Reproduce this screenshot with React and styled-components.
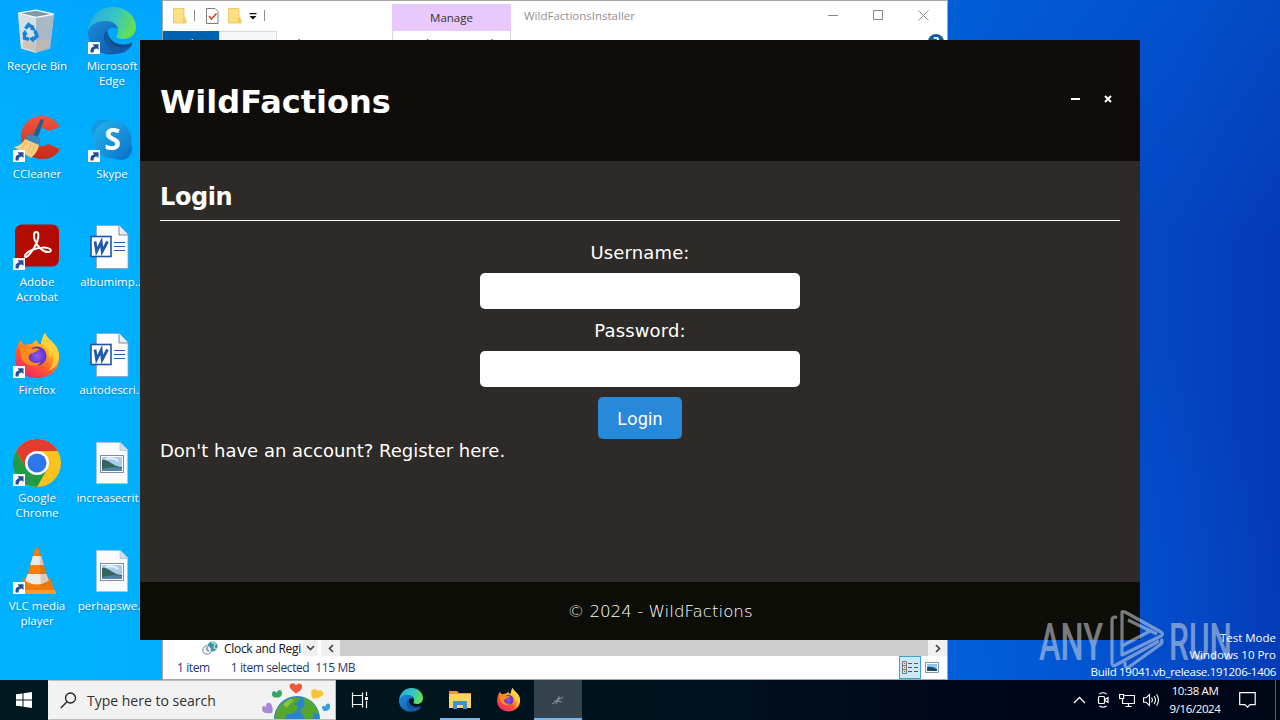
import React from "react";
import styled, { createGlobalStyle, css } from "styled-components";

const ui = '"Open Sans", "Noto Sans", sans-serif';
const verdana = '"DejaVu Sans", sans-serif';

const GlobalStyle = createGlobalStyle`
  * { box-sizing: border-box; }
  body {
    margin: 0;
    overflow: hidden;
    font-family: ${ui};
  }
  svg { display: block; flex: none; }
`;

/* ---------- drawings ---------- */

const ShortcutArrow = () => (
  <g transform="translate(0 1)">
    <rect x="1" y="34" width="12" height="12" fill="#fbfdff" />
    <path d="M3.8 44.5c-1-3.600.6-5.700 3.300-6.100l-1.400-2.100h5.800v5.700l-1.700-1.600c-2.200 0-3.400 1.500-3.200 4.100z" fill="#234f94" />
  </g>
);

const RecycleIcon = () => (
  <svg width="48" height="48" viewBox="1 0 48 48">
    <g transform="translate(0 1) scale(1 1.040)">
      <path d="M6 5l18-3 18 4-4 33-14 4-15-4z" fill="#b9c7d3" />
      <path d="M6 5l18 3v35l-15-4z" fill="#d5dfe6" />
      <path d="M24 8l18-2-4 33-14 4z" fill="#aab8c5" />
      <path d="M6 5l18-3 18 4-18 3z" fill="#7f98a8" stroke="#f2f8fb" strokeWidth="1.300" />
      <path d="M11 32l6-3 7 4v9l-13-4zM24 33l7-4 6 3-1 6-12 4z" fill="#c9b8ad" opacity=".7" />
      <g fill="none" stroke="#1583d8" strokeWidth="3.400">
        <path d="M13.500 20l3-4 4.500 3" />
        <path d="M23 22l2 5-4.500 4" />
        <path d="M17 30l-4.500-1v-5" />
      </g>
      <path d="M21 16l3 6-6-1zM21.500 27v6.500l-4.500-4zM10 24.500l3-3.500 3 5z" fill="#1583d8" />
    </g>
  </svg>
);

const EdgeArt = ({ id }) => (
  <g>
    <defs>
      <linearGradient id={`${id}a`} x1="0" y1="0.2" x2="1" y2="0.5">
        <stop offset="0" stopColor="#2aa9e0" />
        <stop offset=".55" stopColor="#36c6c4" />
        <stop offset="1" stopColor="#66e04f" />
      </linearGradient>
      <linearGradient id={`${id}b`} x1="0" y1="0" x2="1" y2="1">
        <stop offset="0" stopColor="#1b8fdc" />
        <stop offset="1" stopColor="#1156a8" />
      </linearGradient>
    </defs>
    <path d="M0 24C2 9 12 0 25 0c14 0 23 10 23 20 0 8-6 12-13 12-5 0-7-2-6-4 3-4 1-12-8-13C11 14 3 18 0 24z" fill={`url(#${id}a)`} />
    <path d="M0 24c3-7 9-10 17-10 7 0 12 3 13 8-6-4-13 1-13 9 0 7 5 13 11 16C12 50-1 39 0 24z" fill={`url(#${id}b)`} />
    <path d="M19 23c-5 5-3 14 3 18 7 5 17 3 22-4 1-1 0-2-1-1-12 5-23-2-24-13z" fill="#114a8b" />
    <path d="M17 31c0 7 5 13 11 16 7 0 13-4 16-9-12 6-25 1-25-15-1 2-2 5-2 8z" fill="#1459a6" />
  </g>
);

const EdgeIcon = () => (
  <svg width="50" height="48" viewBox="0 0 50 48">
    <g transform="translate(1 0)"><EdgeArt id="edge" /></g>
    <ShortcutArrow />
  </svg>
);

const CCleanerIcon = () => (
  <svg width="48" height="48" viewBox="1 0 48 48">
    <defs>
      <linearGradient id="cc" x1="0" y1="0" x2="0" y2="1">
        <stop offset="0" stopColor="#f0553d" />
        <stop offset="1" stopColor="#c92a19" />
      </linearGradient>
    </defs>
    <path d="M48 12C43 4 37 1 30 1 18 1 9 10 9 22s9 22 21 22c8 0 14-3 18-10l-12-5c-7 5-15 1-15-7s8-12 15-6z" fill="url(#cc)" />
    <path d="M29 4l3 1-7 19-5-2z" fill="#285d87" />
    <path d="M18 19l9 3c2 4 2 6-1 8l-12-5c0-3 1-5 4-6z" fill="#3587bd" />
    <path d="M13 24l14 6c-1 6-4 9-8 13L2 32c5-1 8-3 11-8z" fill="#f8ce83" />
    <path d="M14 27l-4 7M19 29l-3 8M23 30l-4 9" stroke="#e8b763" fill="none" />
    <ShortcutArrow />
  </svg>
);

const SkypeIcon = () => (
  <svg width="50" height="48" viewBox="0 0 50 48">
    <defs>
      <linearGradient id="sk" x1="0" y1="0" x2="1" y2="1">
        <stop offset="0" stopColor="#26b5ee" />
        <stop offset="1" stopColor="#0873c8" />
      </linearGradient>
    </defs>
    <circle cx="16" cy="15" r="11" fill="#149ae2" />
    <circle cx="34" cy="34" r="11" fill="#0b78d0" />
    <circle cx="25.500" cy="24.500" r="19" fill="url(#sk)" />
    <text x="25.500" y="35" textAnchor="middle" fontFamily="Open Sans, sans-serif" fontWeight="700" fontSize="30" fill="#fff">S</text>
    <ShortcutArrow />
  </svg>
);

const AcrobatIcon = () => (
  <svg width="48" height="48" viewBox="1 0 48 48">
    <rect x="3" y="1.500" width="44" height="42" rx="7" fill="#b30b00" />
    <path d="M24 9c3-1 3 5 1 10-3 7-8 14-11 15-3 0 0-5 6-7 7-3 15-3 18-1 3 3-2 4-6 2-6-3-10-10-10-15 0-3 1-4 2-4z" fill="none" stroke="#fff" strokeWidth="2" />
    <ShortcutArrow />
  </svg>
);

const FirefoxArt = ({ id }) => (
  <g>
    <defs>
      <linearGradient id={`${id}a`} x1=".85" y1="0" x2=".2" y2="1">
        <stop offset="0" stopColor="#fff04a" />
        <stop offset=".35" stopColor="#ffab24" />
        <stop offset=".65" stopColor="#ff5630" />
        <stop offset="1" stopColor="#e91d77" />
      </linearGradient>
      <radialGradient id={`${id}b`}>
        <stop offset="0" stopColor="#9359ef" />
        <stop offset="1" stopColor="#5a2fc1" />
      </radialGradient>
    </defs>
    <path d="M8 9c1 3 2 4 4 5 3-1 4-1 7-1 2-3 3-3 5-4 0 3 1 4 4 4 1-6 3-10 4-11 2 5 6 7 9 11 4 4 6 9 5 16-1 11-10 18-22 18S2 39 2 27C2 19 5 12 8 9z" fill={`url(#${id}a)`} />
    <circle cx="24" cy="25" r="9.500" fill={`url(#${id}b)`} />
    <path d="M8 15c5-2 9 0 11 3 3-1 6-1 8 1-3 0-4 2-7 3-3 0-5 3-4 6 2 4 7 5 12 3-5 7-17 4-20-5-1-4-1-8 0-11z" fill="#ff8b1f" />
    <path d="M28 13c6 2 9 7 8 14 3-1 3-4 3-6 3 7 1 15-5 19 13-3 15-17 8-26-4-5-8-7-10-12-2 3-3 7-4 11z" fill="#ffd43a" opacity=".8" />
  </g>
);

const FirefoxIcon = () => (
  <svg width="48" height="48" viewBox="1 0 48 48">
    <g transform="translate(1 0)"><FirefoxArt id="ff" /></g>
    <ShortcutArrow />
  </svg>
);

const ChromeIcon = () => (
  <svg width="48" height="48" viewBox="1 0 48 48">
    <circle cx="25" cy="24" r="24" fill="#fcc31e" />
    <path d="M4.200 12A24 24 0 0 1 45.800 12H25L14.600 30z" fill="#e33b2e" />
    <path d="M4.200 12A24 24 0 0 0 25 48L35.400 30H14.600z" fill="#229a48" />
    <circle cx="25" cy="24" r="12" fill="#fff" />
    <circle cx="25" cy="24" r="9.500" fill="#2f76ea" />
    <ShortcutArrow />
  </svg>
);

const VlcIcon = () => (
  <svg width="48" height="48" viewBox="1 0 48 48">
    <path d="M11 31h27l6 16H9z" fill="#ef7a0b" />
    <path d="M10 43h33l1 4H9z" fill="#f99b32" />
    <path d="M23 2q2-2 4 0l10 34q-12 8-24 0z" fill="#f57d09" />
    <path d="M20.800 9h8.400l2.600 9H18.200zM15.600 27h18.800l2.300 7q-12 7-23.400 0z" fill="#eceae6" />
    <path d="M27 2l10 34q-4 3-8 3z" fill="#9d4a05" opacity=".2" />
    <ShortcutArrow />
  </svg>
);

const WordIcon = () => (
  <svg width="48" height="48" viewBox="0 0 48 48">
    <path d="M8.500 2.500h23l8.500 9v34H8.500z" fill="#fdfdff" stroke="#8ba0b4" strokeWidth=".8" />
    <path d="M31 2.500v9.500h9" fill="#e8eef5" stroke="#6c8094" strokeWidth=".9" />
    <path d="M26 19.500h11M26 23.500h11M26 27.500h11M26 15.500h0M26 31.500h0" stroke="#2b5caa" strokeWidth="1" />
    <rect x="3" y="13.500" width="20" height="20" fill="#fff" stroke="#1d53a9" strokeWidth="1.600" />
    <path d="M7 18.500l1.600 10 4.600-9.500 1 9.500 5.300-10" fill="none" stroke="#2359ad" strokeWidth="2.800" />
  </svg>
);

const PictureIcon = () => (
  <svg width="48" height="48" viewBox="0 1 48 48">
    <path d="M8.500 4.500h24l7 7v34h-31z" fill="#f9fafb" stroke="#b5c0c9" strokeWidth=".8" />
    <path d="M32 4.500v8h8z" fill="#cde2ee" stroke="#a9bac7" strokeWidth=".6" />
    <rect x="12.500" y="17.500" width="23" height="17" fill="#fff" stroke="#7e8d9c" />
    <path d="M14 19h20v14H14z" fill="#a9cbed" />
    <path d="M14 22q3-1 9 3t11 4v2H14z" fill="#33665c" />
    <path d="M14 31q10-3 20-1v3H14z" fill="#5182a8" />
    <path d="M18 21q7-2 12 2" stroke="#e8f3fb" strokeWidth="2" fill="none" />
  </svg>
);

const FolderGlyph = () => (
  <svg width="14" height="16" viewBox="0 0 14 16">
    <path d="M.5.500h10.500v10l2 1v3.500H.5z" fill="#fbdf83" stroke="#e5c05d" strokeWidth=".8" />
    <path d="M10 9.500h2.500v5.500H10z" fill="#f6cb55" />
  </svg>
);

const CheckDoc = () => (
  <svg width="13" height="16" viewBox="0 0 13 16">
    <path d="M.5.500h8.500l3 3v12H.5z" fill="#fff" stroke="#7c7c7c" />
    <path d="M3 8l2.500 3 5-5.500" fill="none" stroke="#d84c26" strokeWidth="1.700" />
  </svg>
);

const Globe = () => (
  <svg width="74" height="38" viewBox="261 681 74 38">
    <circle cx="297" cy="719" r="23" fill="#2b83cf" />
    <path d="M276 712c3-8 11-14 20-15l5 2-7 5 5 3-5 6-7 1-3 6h-10zM303 697c9 3 14 9 16 17l-5-1-2 6h-7l-5-9 5-5z" fill="#55a630" />
    <path d="M283 704l7-5 4 1-8 8z" fill="#8bc540" />
    <g>
      <path d="M296 693.500c-4-3-6.500-5-6.500-7.500 0-3 5-4 6.500-.5 2-3.500 6.500-2 6.200 1.500-.2 3-3 4.500-6.200 6.500z" fill="#ed5a3c" />
      <path d="M280 697c-4 1-7 1-8-2-1-4 3-5 5-2 0-4 5-4 5 0 0 2-1 3-2 4z" fill="#2fa964" />
      <path d="M313 699c-2-4-3-9 1-10 2 0 3 1 4 2 3-2 6 1 5 4-1 2-6 3-10 4z" fill="#f8c233" />
      <path d="M272 713c-5 1-10 0-10-4 0-3 2-4 4-2-1-5 5-6 6-1 1 2 1 4 0 7z" fill="#a78bd2" />
      <path d="M324 711c-4-4-1-7 1-4 1-5 6-4 5 0 0 3-3 4-6 4z" fill="#2f9fe6" />
    </g>
  </svg>
);

const TaskViewIcon = () => (
  <svg width="18" height="18" viewBox="0 0 18 18" fill="none" stroke="#f3f6f7" strokeWidth="1.200">
    <path d="M1.500 1.500v3h10v-3M1.500 16.500v-3h10v3M1.500 4.500v9M11.500 4.500v9M15.500 1v4M15.500 10v7" />
    <path d="M14 6h3v3h-3z" fill="#f3f6f7" stroke="none" />
  </svg>
);

const ExplorerIcon = () => (
  <svg width="22" height="20" viewBox="0 0 22 20">
    <path d="M0 1h8l2 2h12v4H0z" fill="#e99c1b" />
    <path d="M0 4h22v14H0z" fill="#fcd465" />
    <path d="M4 19v-7q0-1 1-1h12q1 0 1 1v7h-4v-4H8v4z" fill="#3c93d1" />
  </svg>
);

const PluginIcon = () => (
  <svg width="14" height="14" viewBox="0 0 14 14" fill="none" stroke="#abb4ba" strokeWidth="1">
    <path d="M1 11l4-2 2-4 2 1 3-2M3 8h4l4 1M8 3v4l-3 4" opacity=".7" />
  </svg>
);

const RunLogo = () => (
  <svg width="196" height="66" viewBox="1038 608 196 66" opacity=".55">
    <g fill="#cfd5df" fontFamily="Roboto, sans-serif" fontSize="52" fontWeight="500">
      <text x="1039" y="660" textLength="64" lengthAdjust="spacingAndGlyphs">ANY</text>
      <text x="1169" y="660" textLength="63" lengthAdjust="spacingAndGlyphs">RUN</text>
    </g>
    <g fill="none" stroke="#cfd5df" strokeWidth="3.200" strokeLinejoin="round">
      <path d="M1117 617.500l-2-.5q-3 0-3 3v43q0 4 4 2l43-24" />
      <path d="M1122 612v43l39-19q3-2 0-4l-36-20q-3-1-3 0z" />
      <path d="M1128 620l29 14M1122 646l30-16M1125 662v3q0 4 4 2l32-23q2-2 0-5" />
    </g>
  </svg>
);

/* ---------- desktop ---------- */

const Desktop = styled.main`
  position: relative;
  width: 1280px;
  height: 720px;
  overflow: hidden;
  background:
    radial-gradient(ellipse 420px 500px at 880px 700px, rgba(0, 112, 235, 0.5), transparent),
    linear-gradient(180deg, rgba(0, 130, 245, 0.2) 0, transparent 240px),
    linear-gradient(90deg, #00b2ff 0, #00b0ff 160px, #0057d0 940px, #0444c2 1180px, #033bb5 1280px);
`;

const IconGrid = styled.section`
  display: grid;
  grid-template-columns: 74px 76px;
  grid-auto-rows: 108px;
  width: 150px;
  padding-top: 7px;
`;

const Shortcut = styled.div`
  display: flex;
  flex-direction: column;
  align-items: center;
`;

const ShortcutLabel = styled.span`
  margin-top: 3px;
  color: #fff;
  font-size: 11.5px;
  line-height: 15px;
  text-align: center;
  white-space: pre;
  text-shadow: 0 1px 2px rgba(0, 40, 90, 0.35);
`;

const shortcuts = [
  { label: "Recycle Bin", icon: RecycleIcon },
  { label: "Microsoft\nEdge", icon: EdgeIcon },
  { label: "CCleaner", icon: CCleanerIcon },
  { label: "Skype", icon: SkypeIcon },
  { label: "Adobe\nAcrobat", icon: AcrobatIcon },
  { label: "albumimp...", icon: WordIcon },
  { label: "Firefox", icon: FirefoxIcon },
  { label: "autodescri...", icon: WordIcon },
  { label: "Google\nChrome", icon: ChromeIcon },
  { label: "increasecrit...", icon: PictureIcon },
  { label: "VLC media\nplayer", icon: VlcIcon },
  { label: "perhapswe...", icon: PictureIcon },
];

/* ---------- explorer window ---------- */

const Explorer = styled.section`
  position: absolute;
  left: 162px;
  top: 0;
  width: 786px;
  height: 680px;
  display: flex;
  flex-direction: column;
  background: #fff;
  border: 1px solid #a5a5a5;
`;

const ExplorerTop = styled.header`
  display: flex;
  height: 45px;
`;

const QuickSide = styled.div`
  width: 229px;
`;

const QuickBar = styled.div`
  display: flex;
  align-items: center;
  height: 30px;
  padding-left: 10px;
`;

const QuickItem = styled.span`
  display: flex;
  margin-right: ${(p) => p.$gap}px;
`;

const Divider = styled.i`
  width: 1px;
  height: 11px;
  margin: 0 ${(p) => p.$gap || 0}px 2px 0;
  background: #8c8c8c;
`;

const Tabs = styled.div`
  display: flex;
`;

const tabText = css`
  height: 27px;
  padding-top: 3px;
  font-size: 12px;
  line-height: 22px;
  text-align: center;
  color: #333;
`;

const Tab = styled.div`
  ${tabText}
  width: ${(p) => p.$w}px;
  ${(p) => p.$file && "background: #0063b1; color: #fff;"}
  ${(p) => p.$open && "background: #f5f6f7; border: 1px solid #dadbdc; border-bottom: 0; line-height: 20px;"}
`;

const ManageGroup = styled.div`
  width: 119px;
  padding-top: 3px;
`;

const ManageTitle = styled.div`
  height: 27px;
  background: #e9c8fc;
  font-size: 11.5px;
  line-height: 28px;
  text-align: center;
  color: #333;
`;

const ManageTab = styled.div`
  ${tabText}
  border: 1px solid #d7d7d7;
  border-top: 0;
  white-space: nowrap;
`;

const ExplorerTitle = styled.div`
  width: 300px;
  padding-left: 13px;
  font-size: 11.5px;
  line-height: 29px;
  color: #8f8f8f;
`;

const CaptionSide = styled.div`
  width: 135px;
  margin-left: auto;
`;

const CaptionButtons = styled.div`
  display: flex;
  align-items: center;
  height: 29px;
  padding-left: 16px;
  gap: 34px;
`;

const HelpRow = styled.div`
  display: flex;
  justify-content: flex-end;
  align-items: center;
  gap: 13px;
  padding: 4px 3px 0 0;
`;

const HelpBadge = styled.span`
  width: 16px;
  height: 16px;
  border-radius: 50%;
  background: #0d5ca3;
  color: #fff;
  font-size: 12px;
  font-weight: 700;
  line-height: 16px;
  text-align: center;
`;

const ExplorerBottom = styled.div`
  display: flex;
  margin-top: auto;
  height: 16px;
`;

const TreeRow = styled.div`
  display: flex;
  align-items: center;
  width: 140px;
  padding-left: 39px;
  gap: 6px;
  color: #111;
  white-space: nowrap;
`;

const TreeText = styled.span`
  font-size: 12px;
  line-height: 16px;
  letter-spacing: -0.3px;
  padding-top: 1px;
`;

const ScrollButton = styled.div`
  display: flex;
  align-items: center;
  justify-content: center;
  width: ${(p) => p.$w}px;
  background: #f0f0f0;
`;

const TreeScroll = styled(ScrollButton)`
  padding-bottom: 1px;
  margin-right: 3px;
`;

const ScrollThumb = styled.div`
  flex: 1;
  background: #cdcdcd;
`;

const StatusBar = styled.footer`
  display: flex;
  align-items: center;
  height: 23px;
  padding: 0 4px 0 14px;
  color: #26386f;
  font-size: 12px;
`;

const StatusText = styled.span`
  margin-right: ${(p) => p.$gap || 0}px;
  letter-spacing: -0.4px;
  white-space: nowrap;
`;

const ViewButtons = styled.div`
  display: flex;
  align-items: center;
  margin-left: auto;
`;

const ViewButton = styled.div`
  display: flex;
  align-items: center;
  justify-content: center;
  width: 22px;
  height: 23px;
  ${(p) => p.$active && "background: #cce8f6; border: 1px solid #3aa2d4;"}
`;

/* ---------- launcher window ---------- */

const Launcher = styled.section`
  position: absolute;
  left: 140px;
  top: 40px;
  width: 1000px;
  height: 600px;
  display: flex;
  flex-direction: column;
  background: #2e2a27;
  color: #fff;
  font-family: ${verdana};
  font-size: 18px;
`;

const LauncherHeader = styled.header`
  display: flex;
  align-items: center;
  justify-content: space-between;
  height: 121px;
  padding: 0 27px 0 20px;
  background: #0f0c09;
`;

const Brand = styled.h1`
  margin: 0;
  padding-top: 2px;
  font-size: 32px;
  line-height: 40px;
`;

const WindowActions = styled.div`
  display: flex;
  align-items: center;
  gap: 22px;
  padding-bottom: 3px;
`;

const LauncherBody = styled.div`
  flex: 1;
  padding: 20px 20px 0;
`;

const Heading = styled.h2`
  margin: 0;
  height: 40px;
  border-bottom: 1px solid #fff;
  font-size: 24px;
  line-height: 33px;
  letter-spacing: -0.4px;
`;

const Form = styled.form`
  display: flex;
  flex-direction: column;
  align-items: center;
  padding-top: 20px;
`;

const Label = styled.label`
  height: 22px;
  line-height: 23px;
  margin-bottom: 10px;
  letter-spacing: 0.15px;
`;

const Input = styled.input`
  width: 320px;
  height: 36px;
  margin: 0 0 10px;
  padding: 8px;
  border: 0;
  border-radius: 5px;
  background: #fff;
  outline: none;
`;

const LoginButton = styled.button`
  width: 84px;
  height: 42px;
  padding: 0;
  border: 0;
  border-radius: 5px;
  background: #2888da;
  color: #fff;
  font: 400 18px Roboto, sans-serif;
  letter-spacing: 0.2px;
`;

const RegisterText = styled.p`
  margin: 0;
  line-height: 24px;
`;

const LauncherFooter = styled.footer`
  height: 58px;
  padding-left: 40px;
  background: #0e0e09;
  color: #fff;
  font-size: 16.7px;
  font-weight: 300;
  line-height: 59px;
  text-align: center;
`;

/* ---------- watermarks and taskbar ---------- */

const Watermark = styled.div`
  position: absolute;
  left: 1038px;
  top: 608px;
`;

const BuildInfo = styled.div`
  position: absolute;
  right: 4px;
  top: 629px;
  display: flex;
  flex-direction: column;
  align-items: flex-end;
  color: #fff;
  font-size: 11.5px;
  line-height: 17px;
  white-space: nowrap;
`;

const BuildNumber = styled.span`
  letter-spacing: -0.29px;
`;

const Taskbar = styled.nav`
  position: absolute;
  left: 0;
  top: 680px;
  width: 1280px;
  height: 40px;
  display: flex;
  background: linear-gradient(90deg, #001820, #00131d 50%, #00061a 80%, #000718);
`;

const StartButton = styled.div`
  display: flex;
  align-items: center;
  justify-content: center;
  width: 48px;
`;

const SearchBox = styled.div`
  display: flex;
  align-items: center;
  width: 288px;
  padding-left: 11px;
  background: #f2f2f2;
  border: 1px solid #b9bdbf;
  border-left-color: #f2f2f2;
  color: #303030;
  font-size: 14px;
`;

const SearchText = styled.span`
  width: 184px;
  padding-left: 10px;
  white-space: nowrap;
`;

const TaskButton = styled.div`
  display: flex;
  align-items: center;
  justify-content: center;
  width: ${(p) => p.$w || 49}px;
  padding-bottom: 1px;
  ${(p) => p.$active && "background: #34434d;"}
  ${(p) => p.$open && "border-bottom: 2px solid #79b8e8; padding-bottom: 0; padding-top: 1px;"}
`;

const RunningButton = styled(TaskButton)`
  margin: 0 ${(p) => p.$side || 0}px;
`;

const Tray = styled.div`
  display: flex;
  align-items: center;
  margin-left: auto;
  color: #fff;
`;

const TrayCell = styled.div`
  display: flex;
  justify-content: center;
  width: ${(p) => p.$w || 24}px;
`;

const Clock = styled.div`
  width: 64px;
  font-size: 11.5px;
  line-height: 18px;
  letter-spacing: -0.4px;
  text-align: center;
  white-space: nowrap;
`;

const ShowDesktop = styled.i`
  width: 5px;
  height: 40px;
  margin-left: 8px;
  border-left: 1px solid #596270;
`;

const ExplorerWindow = () => (
  <Explorer>
    <ExplorerTop>
      <QuickSide>
        <QuickBar>
          <QuickItem $gap={7}><FolderGlyph /></QuickItem>
          <Divider $gap={11} />
          <QuickItem $gap={9}><CheckDoc /></QuickItem>
          <QuickItem $gap={7}><FolderGlyph /></QuickItem>
          <QuickItem $gap={7}>
            <svg width="8" height="7" viewBox="0 0 8 7"><path d="M.5 0h7v1.200h-7zM.5 3h7L4 6.500z" fill="#111" /></svg>
          </QuickItem>
          <Divider />
        </QuickBar>
        <Tabs>
          <Tab $w={56} $file>File</Tab>
          <Tab $w={58} $open>Home</Tab>
          <Tab $w={60}>Share</Tab>
          <Tab $w={54}>View</Tab>
        </Tabs>
      </QuickSide>
      <ManageGroup>
        <ManageTitle>Manage</ManageTitle>
        <ManageTab>Application Tools</ManageTab>
      </ManageGroup>
      <ExplorerTitle>WildFactionsInstaller</ExplorerTitle>
      <CaptionSide>
        <CaptionButtons>
          <svg width="11" height="11" viewBox="0 0 11 11"><path d="M0 5.500h10" stroke="#888" /></svg>
          <svg width="11" height="11" viewBox="0 0 11 11"><path d="M.5.500h9v9h-9z" fill="none" stroke="#888" /></svg>
          <svg width="11" height="11" viewBox="0 0 11 11"><path d="M.5.500l10 10M10.500.500l-10 10" stroke="#888" /></svg>
        </CaptionButtons>
        <HelpRow>
          <svg width="8" height="5" viewBox="0 0 8 5"><path d="M1 4l3-3 3 3" fill="none" stroke="#aaa" /></svg>
          <HelpBadge>?</HelpBadge>
        </HelpRow>
      </CaptionSide>
    </ExplorerTop>
    <ExplorerBottom>
      <TreeRow>
        <svg width="16" height="14" viewBox="0 0 16 14">
          <circle cx="10.500" cy="5.500" r="5" fill="#3b8fb0" />
          <path d="M9 1l4 2-1 4 3 1" stroke="#b9dcc8" fill="none" strokeWidth="1.500" />
          <circle cx="5" cy="9" r="4.300" fill="#e9f0f5" stroke="#7894a8" />
          <path d="M5 6v3l2 1" stroke="#49637a" fill="none" />
        </svg>
        <TreeText>Clock and Regi</TreeText>
      </TreeRow>
      <TreeScroll $w={15}>
        <svg width="9" height="6" viewBox="0 0 9 6"><path d="M1 1l3.500 3.500L8 1" fill="none" stroke="#444" strokeWidth="1.700" /></svg>
      </TreeScroll>
      <ScrollButton $w={19}>
        <svg width="6" height="9" viewBox="0 0 6 9"><path d="M5 1L1.500 4.500 5 8" fill="none" stroke="#444" strokeWidth="1.700" /></svg>
      </ScrollButton>
      <ScrollThumb />
      <ScrollButton $w={19}>
        <svg width="6" height="9" viewBox="0 0 6 9"><path d="M1 1l3.500 3.500L1 8" fill="none" stroke="#444" strokeWidth="1.700" /></svg>
      </ScrollButton>
    </ExplorerBottom>
    <StatusBar>
      <StatusText $gap={21}>1 item</StatusText>
      <StatusText $gap={6}>1 item selected</StatusText>
      <StatusText>115 MB</StatusText>
      <ViewButtons>
        <ViewButton $active>
          <svg width="17" height="14" viewBox="0 0 17 14" fill="none">
            <path d="M.5.500h4v4h-4zM.5 4.500h4v4h-4zM.5 8.500h4v4h-4z" stroke="#777" />
            <path d="M2 2.500h1M2 6.500h1M2 10.500h1" stroke="#b5463a" />
            <path d="M6 2.500h4M12 2.500h4M6 6.500h4M12 6.500h4M6 10.500h4M12 10.500h4" stroke="#555" />
          </svg>
        </ViewButton>
        <ViewButton>
          <svg width="14" height="11" viewBox="0 0 14 11">
            <path d="M.5.500h13v10H.5z" fill="#fff" stroke="#8395a6" />
            <path d="M2 2h10v7H2z" fill="#8fc3ea" />
            <path d="M2 5q5-1 10 2v2H2z" fill="#1d4a69" />
          </svg>
        </ViewButton>
      </ViewButtons>
    </StatusBar>
  </Explorer>
);

const LauncherWindow = () => (
  <Launcher>
    <LauncherHeader>
      <Brand>WildFactions</Brand>
      <WindowActions>
        <svg width="11" height="10" viewBox="0 0 11 10"><path d="M1 4h9v2H1z" fill="#fff" /></svg>
        <svg width="10" height="10" viewBox="0 0 10 10"><path d="M2 2l6 6M8 2L2 8" stroke="#fff" strokeWidth="2" /></svg>
      </WindowActions>
    </LauncherHeader>
    <LauncherBody>
      <Heading>Login</Heading>
      <Form>
        <Label htmlFor="username">Username:</Label>
        <Input id="username" type="text" />
        <Label htmlFor="password">Password:</Label>
        <Input id="password" type="password" />
        <LoginButton type="button">Login</LoginButton>
      </Form>
      <RegisterText>Don't have an account? Register here.</RegisterText>
    </LauncherBody>
    <LauncherFooter>© 2024 - WildFactions</LauncherFooter>
  </Launcher>
);

const WindowsTaskbar = () => (
  <Taskbar>
    <StartButton>
      <svg width="16" height="16" viewBox="0 0 16 16"><path d="M0 2.300L6.500 1.400v6H0zM7.500 1.200L16 0v7.400H7.500zM0 8.400h6.500v6.200L0 13.700zM7.500 8.400H16V16l-8.500-1.200z" fill="#fff" /></svg>
    </StartButton>
    <SearchBox>
      <svg width="17" height="17" viewBox="0 0 17 17" fill="none" stroke="#222" strokeWidth="1.300">
        <circle cx="10.500" cy="6" r="5" />
        <path d="M7 9.700L.8 16" />
      </svg>
      <SearchText>Type here to search</SearchText>
      <Globe />
    </SearchBox>
    <TaskButton $w={48}><TaskViewIcon /></TaskButton>
    <TaskButton $w={54}>
      <svg width="24" height="24" viewBox="0 0 48 48"><EdgeArt id="edgeTask" /></svg>
    </TaskButton>
    <RunningButton $w={40} $open $side={2}><ExplorerIcon /></RunningButton>
    <TaskButton $w={52}>
      <svg width="25" height="25" viewBox="0 0 48 48"><FirefoxArt id="ffTask" /></svg>
    </TaskButton>
    <TaskButton $w={48} $active $open><PluginIcon /></TaskButton>
    <Tray>
      <TrayCell>
        <svg width="13" height="8" viewBox="0 0 13 8"><path d="M1 7l5.500-5.500L12 7" fill="none" stroke="#fff" strokeWidth="1.300" /></svg>
      </TrayCell>
      <TrayCell>
        <svg width="13" height="16" viewBox="0 0 13 16" fill="none" stroke="#fff" strokeWidth="1.200">
          <path d="M1.500 5.500q0-1 1-1h4q1 0 1 1v5q0 1-1 1h-4q-1 0-1-1zM8 7.500l3-2v5l-3-2M2.500 2q3.500-2.500 7 0M2.500 14q3.500 2.500 7 0" />
        </svg>
      </TrayCell>
      <TrayCell>
        <svg width="16" height="15" viewBox="0 0 16 15" fill="none" stroke="#fff" strokeWidth="1.200">
          <path d="M5.500 2.500h10v8H3.500V6M6.500 13.500h6M9.500 10.500v3M.6 1.500h4v4h-4z" />
        </svg>
      </TrayCell>
      <TrayCell>
        <svg width="17" height="14" viewBox="0 0 17 14" fill="none" stroke="#fff" strokeWidth="1.100">
          <path d="M.6 4.800h2.500L6.500 1.500v11L3.100 9.200H.6zM8.500 4.700q1.800 2.300 0 4.600M11 3q3 4 0 8M13.500 1.200q4 5.800 0 11.600" />
        </svg>
      </TrayCell>
      <Clock>10:38 AM<br />9/16/2024</Clock>
      <TrayCell $w={40}>
        <svg width="17" height="16" viewBox="0 0 17 16"><path d="M.7.700h15.500v12H11l-2.500 2.500L6 12.700H.7z" fill="none" stroke="#fff" strokeWidth="1.200" /></svg>
      </TrayCell>
      <ShowDesktop />
    </Tray>
  </Taskbar>
);

const App = () => (
  <>
    <GlobalStyle />
    <Desktop>
      <IconGrid>
        {shortcuts.map(({ label, icon: Icon }) => (
          <Shortcut key={label}>
            <Icon />
            <ShortcutLabel>{label}</ShortcutLabel>
          </Shortcut>
        ))}
      </IconGrid>
      <ExplorerWindow />
      <LauncherWindow />
      <Watermark><RunLogo /></Watermark>
      <BuildInfo>
        <span>Test Mode</span>
        <span>Windows 10 Pro</span>
        <BuildNumber>Build 19041.vb_release.191206-1406</BuildNumber>
      </BuildInfo>
      <WindowsTaskbar />
    </Desktop>
  </>
);

export default App;
